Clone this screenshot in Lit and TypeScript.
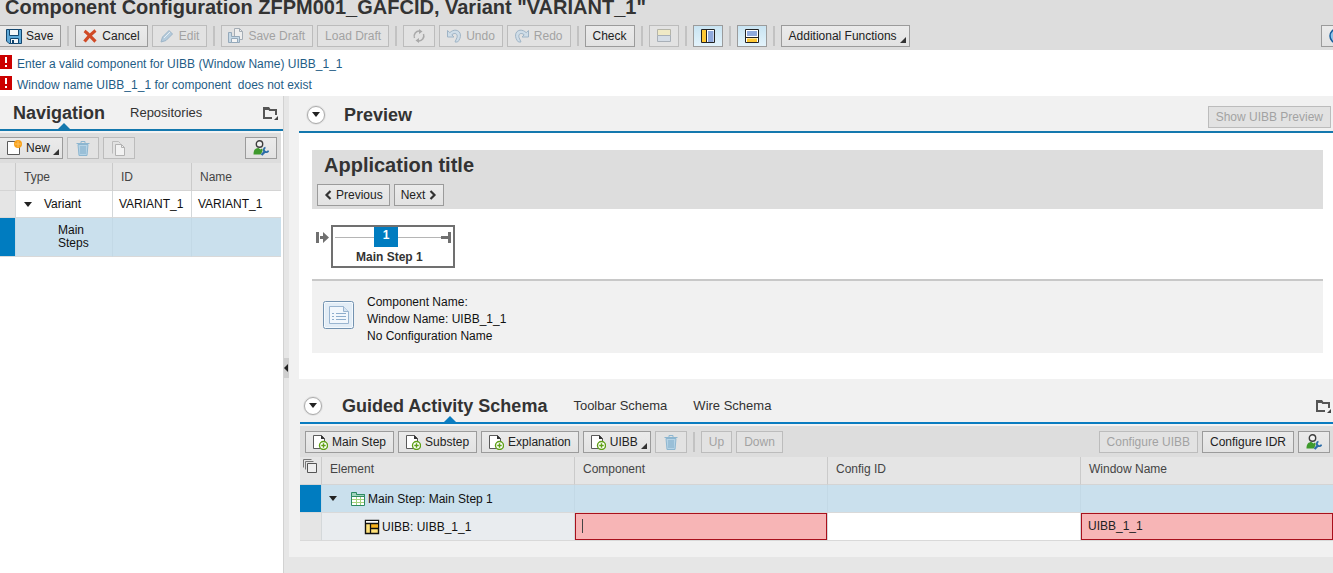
import { LitElement, html, css, svg, nothing, TemplateResult } from "lit";
import { customElement, property, state } from "lit/decorators.js";
import { classMap } from "lit/directives/class-map.js";

const page = svg`<path d="M1.500 1.500h12v13h-12z" fill="#fff" stroke="#5a5a5a"/>`;
const addPage = svg`<path d="M1.500 1.500h8l3 3v10h-11z" fill="#fff" stroke="#5a5a5a"/><path d="M9 1v4h4z" fill="#333"/><circle cx="11.500" cy="11.500" r="4" fill="#fff" stroke="#5fa016" stroke-width="1.400"/><path d="M11.500 9.300v4.400M9.300 11.500h4.400" stroke="#5fa016" stroke-width="1.400"/>`;

const ICONS: Record<string, TemplateResult> = {
  save: svg`<path d="M.500 1.500h15v14H3L.500 13z" fill="#5fa9d8" stroke="#12466f"/><path d="M3.500 1.500h9v6h-9z" fill="#f4f6f8" stroke="#12466f"/><path d="M4.500 10.500h8v5h-8z" fill="#f4f6f8" stroke="#12466f"/><path d="M6 12h2v3H6z" fill="#12466f"/>`,
  cancel: svg`<path d="M2.500 3c3 2 6.500 6 11 10.500M13.500 2.500C9 6 6 9 2.500 13.500" fill="none" stroke="#d04a26" stroke-width="3.200"/>`,
  edit: svg`<path d="M2 14l1.500-5L10 2.500l3.500 3.500L7 12.500z" fill="#b4cbdc" stroke="#9db5c8"/><path d="M5 10l6-6" stroke="#e6eef4"/>`,
  draft: svg`<path d="M6.500 .5h5l3 3v8h-8z" fill="#eee" stroke="#a5adb5"/><path d="M11.500 .5v3h3" fill="none" stroke="#a5adb5"/><path d="M.500 4.500h3v4h8v6h-11z" fill="#c5d8e6" stroke="#95a9ba"/><path d="M3.500 10.500h6v4h-6z" fill="#f4f4f4" stroke="#95a9ba"/>`,
  refresh: svg`<path d="M3.500 10A5 5 0 0 1 9 3.200M12.500 6A5 5 0 0 1 7 12.800" fill="none" stroke="#a9a9a9" stroke-width="1.500"/><path d="M8 1l3.500 2.500L8 6zM8 10v5l-3.500-2.500z" fill="#a9a9a9"/>`,
  undo: svg`<path d="M1.500 2.500v6.500h6.500L5.800 6.800C9 4 12 6 11 9.500L9 14h2.500C15.800 10 15.500 3 10 2.200 7.500 2 5.500 3 3.800 4.700z" fill="#cfdde8" stroke="#9fb4c6"/>`,
  redo: svg`<path d="M14.500 2.500v6.500H8l2.200-2.200C7 4 4 6 5 9.500L7 14H4.500C.2 10 .5 3 6 2.200 8.500 2 10.500 3 12.200 4.700z" fill="#cfdde8" stroke="#9fb4c6"/>`,
  rowsOff: svg`<path d="M1.500 1.500h13v6h-13z" fill="#efe9c6" stroke="#b4b4a8"/><path d="M1.500 7.500h13v6h-13z" fill="#d5dde6" stroke="#a9b0b8"/>`,
  columns: svg`<path d="M1.500 1.500h13v13h-13z" fill="#fff"/><path d="M2 2h4v12H2z" fill="#ffc935"/><path d="M8 3h5.500v11H8z" fill="#8fa9dc"/><path d="M1.500 1.500h13v13h-13zM6.500 1.500v13" fill="none" stroke="#222"/>`,
  rows: svg`<path d="M1.500 1.500h13v13h-13z" fill="#fff"/><path d="M3 3h10v5H3z" fill="#8fa9dc"/><path d="M3 10.500h10V14H3z" fill="#ffc935"/><path d="M1.500 1.500h13v13h-13zM1.500 9.500h13" fill="none" stroke="#222"/>`,
  help: svg`<circle cx="8" cy="8" r="7" fill="#8cc3ea" stroke="#135a9a" stroke-width="1.500"/>`,
  create: svg`${page}<circle cx="12" cy="4" r="4" fill="#f9a21b"/><path d="M12 1v6M9 4h6" stroke="#fbc163"/>`,
  trash: svg`<path d="M3 4.500h10l-1 11H4z" fill="#b5d3e6" stroke="#8db6d0"/><path d="M1.500 3.500h13M6 3V1.500h4V3" fill="none" stroke="#8db6d0"/><path d="M6 6v8M8 6v8M10 6v8" stroke="#7fabc8"/>`,
  copy: svg`<path d="M1.500 13.500V1.500h6l2 2" fill="none" stroke="#bcbcbc"/><path d="M4.500 4.500h6l3 3v8h-9z" fill="#f2f2f2" stroke="#b2b2b2"/><path d="M10.500 4.500v3h3" fill="none" stroke="#b2b2b2"/>`,
  person: svg`<circle cx="6.500" cy="4" r="3.200" fill="#f2f2f2" stroke="#3e3e3e" stroke-width="1.400"/><path d="M.500 14.500C.5 10 2.500 8 5.500 8l2 1.500L9 8.500c1 1 1 3-1.500 6z" fill="#3f9a2d"/><path d="M8.500 15l4-4" stroke="#2c6da8" stroke-width="2.400"/><path d="M12.500 7.500a2.400 2.400 0 1 0 3 3" fill="none" stroke="#2c6da8" stroke-width="1.800"/>`,
  add: addPage,
  folder: svg`<path d="M2 13V3h4.500l1.300 2H14v5M1 13h9" fill="none" stroke="#555" stroke-width="2"/><path d="M2 3h5l1 2H2z" fill="#555"/><path d="M16 11v4h-4z" fill="#444"/>`,
  left: svg`<path d="M10.500 4L6.500 8l4 4" fill="none" stroke="#333" stroke-width="2.200"/>`,
  step: svg`<path d="M1.500 3.500h13v11h-13z" fill="#fff" stroke="#2c8a62"/><path d="M1.500 5.500v-4h5v2h8v2z" fill="#9fd3bb" stroke="#2c8a62"/><path d="M2 8.500h12M2 11.500h12M6.500 6v8M10.500 6v8" stroke="#a5d17c"/>`,
  layout: svg`<path d="M1.500 1.500h13v13h-13z" fill="#ffe27a" stroke="#111" stroke-width="1.400"/><path d="M2 2h12v2H2z" fill="#fff"/><path d="M7 5h7v5H7z" fill="#f6b11d"/><path d="M1.500 4.500h13M6.500 4.500v10M6.500 9.500h8" fill="none" stroke="#111" stroke-width="1.300"/>`,
  selectAll: svg`<path d="M1.500 9.500v-8h8M3.500 11.500v-8h8" fill="none" stroke="#777"/><path d="M5.500 5.500h9v9h-9z" fill="#eee" stroke="#555"/>`,
};

const icon = (name: string) => html`<svg class="icon" width="16" height="16" viewBox="0 0 16 16" aria-hidden="true">${ICONS[name]}</svg>`;

const base = css`
  * { box-sizing: border-box; }
  .icon { display: block; flex: none; }
  button { font: inherit; color: inherit; margin: 0; cursor: default; }
  .plain { border: 0; background: none; padding: 0; display: block; }
  .arrow { border: 4px solid transparent; border-top: 5px solid #222; border-bottom: 0; width: 0; height: 0; }
  .toolbar { display: flex; align-items: center; gap: 4px; background: #ddd; }
  .separator { width: 2px; height: 20px; margin: 0 2px; background: #c2c2c2; flex: none; }
  .grow { flex: 1; }
`;

@customElement("tool-button")
class ToolButton extends LitElement {
  @property() label = "";
  @property() icon = "";
  @property() trailing = "";
  @property() hint = "";
  @property({ type: Boolean }) off = false;
  @property({ type: Boolean }) pressed = false;
  @property({ type: Boolean }) menu = false;
  @property({ type: Boolean }) tight = false;
  static styles = [base, css`
    :host { display: block; flex: none; }
    .button {
      position: relative; display: flex; align-items: center; gap: 4px; height: 22px; padding: 0 7px;
      border: 1px solid #9b9b9b; background: linear-gradient(#ebebeb, #e2e2e2); color: #222; white-space: nowrap;
    }
    .off { color: #a2a2a2; border-color: #bcbcbc; background: #e2e2e2; }
    .pressed { background: linear-gradient(#c9e4f2, #e3f3fb); }
    .pictured { padding-left: 6px; }
    .menu { padding-right: 12px; }
    .tight { padding: 0 6px; }
    .corner { position: absolute; right: 3px; bottom: 3px; border: 3px solid #333; border-top-color: transparent; border-left-color: transparent; }
    .flip { transform: scaleX(-1); }
    .chevron { width: 8px; overflow: hidden; display: flex; justify-content: center; }
  `];
  render() {
    const kind = { button: true, off: this.off, pressed: this.pressed, menu: this.menu, pictured: !!this.label && !!this.icon, tight: this.tight };
    const chevron = this.icon === "left";
    return html`<button class=${classMap(kind)} ?disabled=${this.off} aria-label=${this.label || this.hint}>
      ${this.icon ? (chevron ? html`<span class="chevron">${icon("left")}</span>` : icon(this.icon)) : nothing}
      ${this.label ? html`<span>${this.label}</span>` : nothing}
      ${this.trailing ? html`<span class="chevron flip">${icon("left")}</span>` : nothing}
      ${this.menu ? html`<span class="corner"></span>` : nothing}
    </button>`;
  }
}

@customElement("page-header")
class PageHeader extends LitElement {
  static styles = [base, css`
    :host { display: block; }
    .bar { background: #ddd; height: 50px; padding-top: 1px; overflow: hidden; }
    .title { margin: 0 0 12px 5px; font-size: 20px; line-height: 12px; font-weight: bold; color: #333; white-space: nowrap; }
    .toolbar { margin-left: -1px; }
    .last { margin-right: -20px; }
    .messages { background: #fff; margin: 0; padding: 3px 0 1px; list-style: none; }
    .message { display: flex; align-items: center; gap: 5px; height: 21px; color: #1f5d86; }
    .message a { color: inherit; text-decoration: none; white-space: pre; }
    .alert { width: 12px; height: 14px; background: #c00; margin-bottom: 4px; display: flex; flex-direction: column; align-items: center; gap: 2px; padding-top: 2px; }
    .alert::before { content: ""; width: 2px; height: 6px; background: #fff; }
    .alert::after { content: ""; width: 2px; height: 2px; background: #fff; }
  `];
  render() {
    const sep = html`<span class="separator"></span>`;
    return html`
      <header class="bar">
        <h1 class="title">Component Configuration ZFPM001_GAFCID, Variant "VARIANT_1"</h1>
        <div class="toolbar">
          <tool-button label="Save" icon="save"></tool-button>${sep}
          <tool-button label="Cancel" icon="cancel"></tool-button>
          <tool-button label="Edit" icon="edit" off></tool-button>${sep}
          <tool-button label="Save Draft" icon="draft" off></tool-button>
          <tool-button label="Load Draft" off></tool-button>${sep}
          <tool-button hint="Refresh" icon="refresh" off></tool-button>
          <tool-button label="Undo" icon="undo" off></tool-button>
          <tool-button label="Redo" icon="redo" off></tool-button>${sep}
          <tool-button label="Check"></tool-button>${sep}
          <tool-button hint="Messages" icon="rowsOff" off tight></tool-button>${sep}
          <tool-button hint="Navigation" icon="columns" pressed tight></tool-button>${sep}
          <tool-button hint="Preview" icon="rows" pressed tight></tool-button>${sep}
          <tool-button label="Additional Functions" menu></tool-button>
          <span class="grow"></span>
          <tool-button class="last" hint="Help" icon="help"></tool-button>
        </div>
      </header>
      <ul class="messages">
        ${["Enter a valid component for UIBB (Window Name) UIBB_1_1", "Window name UIBB_1_1 for component  does not exist"].map(
          (text) => html`<li class="message"><span class="alert"></span><a href="#">${text}</a></li>`)}
      </ul>`;
  }
}

const tabs = css`
  .tabs { display: flex; align-items: center; background: #f1f1f1; border-bottom: 2px solid #1478ae; color: #333; }
  .tab { position: relative; align-self: stretch; display: flex; align-items: center; font-size: 13px; white-space: nowrap; }
  .active { font-size: 18px; font-weight: bold; }
  .active.marked::after { content: ""; position: absolute; bottom: 0; left: 50%; border: 6px solid transparent; border-bottom-color: #1478ae; border-top: 0; margin-left: 5px; transform: translateX(-50%); }
`;

const grid = css`
  .grid { width: 100%; table-layout: fixed; border-collapse: separate; border-spacing: 0; }
  .grid th { text-align: left; font-weight: normal; background: #e5e5e5; color: #444; border-left: 1px solid #cacaca; border-bottom: 1px solid #d4d4d4; padding: 0 8px; }
  .grid td { background: #fff; color: #111; border-left: 1px solid #d4d8da; border-bottom: 1px solid #d9d9d9; padding: 0; }
  .grid .first { border-left: 0; padding: 0; }
  .grid td.first { background: #e5e5e5; }
  .grid .chosen td { background: #cae0ed; border-left-color: #c3d9e6; }
  .grid .chosen td.first { background: #007cc0; }
`;

@customElement("nav-panel")
class NavPanel extends LitElement {
  static styles = [base, tabs, grid, css`
    :host { display: block; background: #fff; }
    .tabs { height: 35px; padding: 0 5px 0 13px; gap: 25px; }
    .toolbar { border-top: 2px solid #f3f3f3; height: 32px; margin-right: 2px; padding-right: 4px; }
    .new { margin-left: -1px; }
    .wrap { padding-right: 2px; }
    .mark { width: 15px; } .type { width: 97px; } .id { width: 79px; }
    .grid th { height: 28px; }
    .grid td { height: 27px; padding: 0 6px; white-space: nowrap; }
    .grid .child td { height: 39px; line-height: 13px; white-space: normal; }
    .grid td.indent { padding-left: 42px; }
    .tree { display: flex; align-items: center; gap: 12px; padding-left: 2px; }
  `];
  render() {
    return html`
      <nav class="tabs">
        <button class="plain tab active marked">Navigation</button>
        <button class="plain tab">Repositories</button>
        <span class="grow"></span>
        <button class="plain" aria-label="Personalize tabs">${icon("folder")}</button>
      </nav>
      <div class="toolbar">
        <tool-button class="new" label="New" icon="create" menu></tool-button>
        <tool-button hint="Delete" icon="trash" off></tool-button>
        <tool-button hint="Copy" icon="copy" off></tool-button>
        <span class="grow"></span>
        <tool-button hint="Personalize" icon="person"></tool-button>
      </div>
      <div class="wrap"><table class="grid">
        <colgroup><col class="mark"><col class="type"><col class="id"><col></colgroup>
        <thead><tr><th class="first"></th><th>Type</th><th>ID</th><th>Name</th></tr></thead>
        <tbody>
          <tr><td class="first"></td><td><span class="tree"><button class="plain arrow" aria-label="Collapse"></button>Variant</span></td><td>VARIANT_1</td><td>VARIANT_1</td></tr>
          <tr class="chosen child"><td class="first"></td><td class="indent">Main Steps</td><td></td><td></td></tr>
        </tbody>
      </table></div>`;
  }
}

const round = css`
  .round { width: 18px; height: 18px; border: 1px solid #aaa; border-radius: 50%; background: #fff; padding: 0; display: flex; align-items: center; justify-content: center; flex: none; box-shadow: 0 0 0 1px #e2e2e2; }
`;

@customElement("preview-panel")
class PreviewPanel extends LitElement {
  static styles = [base, tabs, round, css`
    :host { display: block; }
    .tabs { height: 37px; padding: 2px 2px 0 8px; gap: 19px; }
    .show { margin-top: 4px; }
    .body { background: #fff; padding: 17px 10px 26px 13px; }
    .title-box { background: #ddd; height: 59px; padding: 4px 5px; }
    .title { margin: 0 0 7px 7px; font-size: 20px; line-height: 23px; color: #333; }
    .buttons { display: flex; gap: 4px; }
    .road { display: flex; height: 70px; padding: 16px 0 0 4px; gap: 1px; }
    .start { margin-top: 6px; flex: none; }
    .step { position: relative; width: 124px; height: 43px; border: 2px solid #707070; display: flex; flex-direction: column; align-items: flex-start; font-weight: bold; color: #333; padding: 0; background: #fff; }
    .line { position: absolute; left: 0; right: 0; top: 4px; width: 120px; }
    .number { position: relative; width: 24px; height: 20px; margin-left: 41px; background: #007cc0; color: #fff; line-height: 17px; text-align: center; }
    .label { line-height: 18px; margin: 1px 0 0 23px; }
    .info { display: flex; align-items: center; gap: 12px; height: 74px; border-top: 2px solid #c8c8c8; background: #f1f1f1; padding: 0 11px; color: #111; }
    .doc { margin-bottom: 5px; }
    .lines { line-height: 17px; margin-top: 4px; }
  `];
  render() {
    return html`
      <div class="tabs">
        <button class="round" aria-label="Collapse preview"><span class="arrow"></span></button>
        <span class="tab active">Preview</span><span class="grow"></span>
        <tool-button class="show" label="Show UIBB Preview" off></tool-button>
      </div>
      <div class="body">
        <div class="title-box">
          <h2 class="title">Application title</h2>
          <div class="buttons">
            <tool-button label="Previous" icon="left" tight></tool-button>
            <tool-button label="Next" trailing="right" tight></tool-button>
          </div>
        </div>
        <div class="road">
          <svg class="start" width="14" height="14" viewBox="0 0 14 14"><path d="M0 1h3v11H0zM4 5h3V1l6 5.500L7 12V8H4z" fill="#707070"/></svg>
          <button class="step">
            <svg class="line" width="120" height="12" viewBox="0 0 120 12"><path d="M2 6.500h106" stroke="#b5b5b5"/><path d="M108 5h7V1h3v11h-3V8h-7z" fill="#707070"/></svg>
            <span class="number">1</span><span class="label">Main Step 1</span>
          </button>
        </div>
        <div class="info">
          <svg class="doc" width="32" height="28" viewBox="0 0 32 28"><rect x=".5" y=".5" width="30" height="27" rx="2" fill="#f4f9fd" stroke="#7392b0"/><rect x="2" y="2" width="27" height="24" fill="#e3edf6"/><path d="M6.500 5.500h14l5 5v12h-19z" fill="#f2f7fc" stroke="#9ab5d0"/><path d="M20.500 5.500v5h5" fill="#d6e4f1" stroke="#9ab5d0"/><path d="M9 12.500h2M13 12.500h10M9 15.500h2M13 15.500h10M9 18.500h2M13 18.500h10" stroke="#8eadcc"/></svg>
          <div class="lines">
            <div>Component Name:</div><div>Window Name: UIBB_1_1</div><div>No Configuration Name</div>
          </div>
        </div>
      </div>`;
  }
}

@customElement("schema-panel")
class SchemaPanel extends LitElement {
  @state() private component = "";
  @state() private windowName = "UIBB_1_1";
  static styles = [base, tabs, round, grid, css`
    :host { display: block; background: #f1f1f1; padding: 0 0 16px 1px; }
    .tabs { height: 45px; padding: 10px 2px 0 4px; gap: 26px; border-bottom-color: #0a7cc0; }
    .round { margin-right: -6px; }
    .active.marked::after { border-bottom-color: #0a7cc0; }
    .toolbar { border-top: 2px solid #f3f3f3; height: 33px; padding: 0 3px 0 5px; }
    .mark { width: 21px; }
    .grid th { height: 28px; padding: 0 8px 3px; }
    .grid th.first { vertical-align: top; padding: 1px 0 0 2px; }
    .grid td { height: 28px; white-space: nowrap; }
    .grid .detail { background: #e9ecef; }
    .tree { display: flex; align-items: center; gap: 2px; padding-left: 7px; }
    .gap { margin-right: 11px; }
    .deep { padding-left: 42px; }
    .field { display: block; width: 100%; height: 27px; border: 0; margin: 0; padding: 0 6px 2px; font: inherit; color: #222; background: #fff; outline: 0; border-radius: 0; }
    .wrong { border: 1px solid #a8101c; background: #f7b5b6; }
    .caret { background: linear-gradient(#444, #444) 6px 5px / 1px 14px no-repeat #f7b5b6; }
  `];
  render() {
    return html`
      <nav class="tabs">
        <button class="round" aria-label="Collapse schema"><span class="arrow"></span></button>
        <button class="plain tab active marked">Guided Activity Schema</button>
        <button class="plain tab">Toolbar Schema</button>
        <button class="plain tab">Wire Schema</button>
        <span class="grow"></span>
        <button class="plain" aria-label="Personalize tabs">${icon("folder")}</button>
      </nav>
      <div class="toolbar">
        <tool-button label="Main Step" icon="add"></tool-button>
        <tool-button label="Substep" icon="add"></tool-button>
        <tool-button label="Explanation" icon="add"></tool-button>
        <tool-button label="UIBB" icon="add" menu></tool-button>
        <tool-button hint="Delete" icon="trash" off></tool-button>
        <span class="separator"></span>
        <tool-button label="Up" off></tool-button>
        <tool-button label="Down" off></tool-button>
        <span class="grow"></span>
        <tool-button label="Configure UIBB" off></tool-button>
        <tool-button label="Configure IDR"></tool-button>
        <tool-button hint="Personalize" icon="person"></tool-button>
      </div>
      <table class="grid">
        <colgroup><col class="mark"><col><col><col><col></colgroup>
        <thead><tr>
          <th class="first"><button class="plain" aria-label="Select all">${icon("selectAll")}</button></th>
          <th>Element</th><th>Component</th><th>Config ID</th><th>Window Name</th>
        </tr></thead>
        <tbody>
          <tr class="chosen"><td class="first"></td>
            <td><span class="tree"><button class="plain arrow gap" aria-label="Collapse"></button>${icon("step")}Main Step: Main Step 1</span></td>
            <td></td><td></td><td></td></tr>
          <tr><td class="first"></td>
            <td class="detail"><span class="tree deep">${icon("layout")}UIBB: UIBB_1_1</span></td>
            <td><input class="field wrong caret" aria-label="Component" .value=${this.component}></td>
            <td><input class="field" aria-label="Config ID"></td>
            <td><input class="field wrong" aria-label="Window Name" .value=${this.windowName}></td></tr>
        </tbody>
      </table>`;
  }
}

@customElement("app-root")
class AppRoot extends LitElement {
  static styles = [base, css`
    :host { display: flex; flex-direction: column; min-height: 100vh; overflow: hidden; font: 12px/14px "Liberation Sans", Arial, sans-serif; background: #e6e6e6; }
    .main { flex: 1; display: grid; grid-template-columns: 283px 6px minmax(0, 1fr); }
    .splitter { background: #e6e6e6; border-left: 1px solid #d2d2d2; display: flex; align-items: center; }
    .handle { width: 6px; height: 20px; margin-top: 66px; background: #cfcfcf; border: 0; padding: 0; display: flex; align-items: center; }
    .handle::before { content: ""; border: 4px solid transparent; border-right-color: #222; border-left: 0; }
    .side { padding-left: 10px; background: #f1f1f1; align-self: start; }
  `];
  render() {
    return html`
      <page-header></page-header>
      <main class="main">
        <nav-panel></nav-panel>
        <div class="splitter"><button class="handle" aria-label="Collapse navigation"></button></div>
        <div class="side"><preview-panel></preview-panel><schema-panel></schema-panel></div>
      </main>`;
  }
}
